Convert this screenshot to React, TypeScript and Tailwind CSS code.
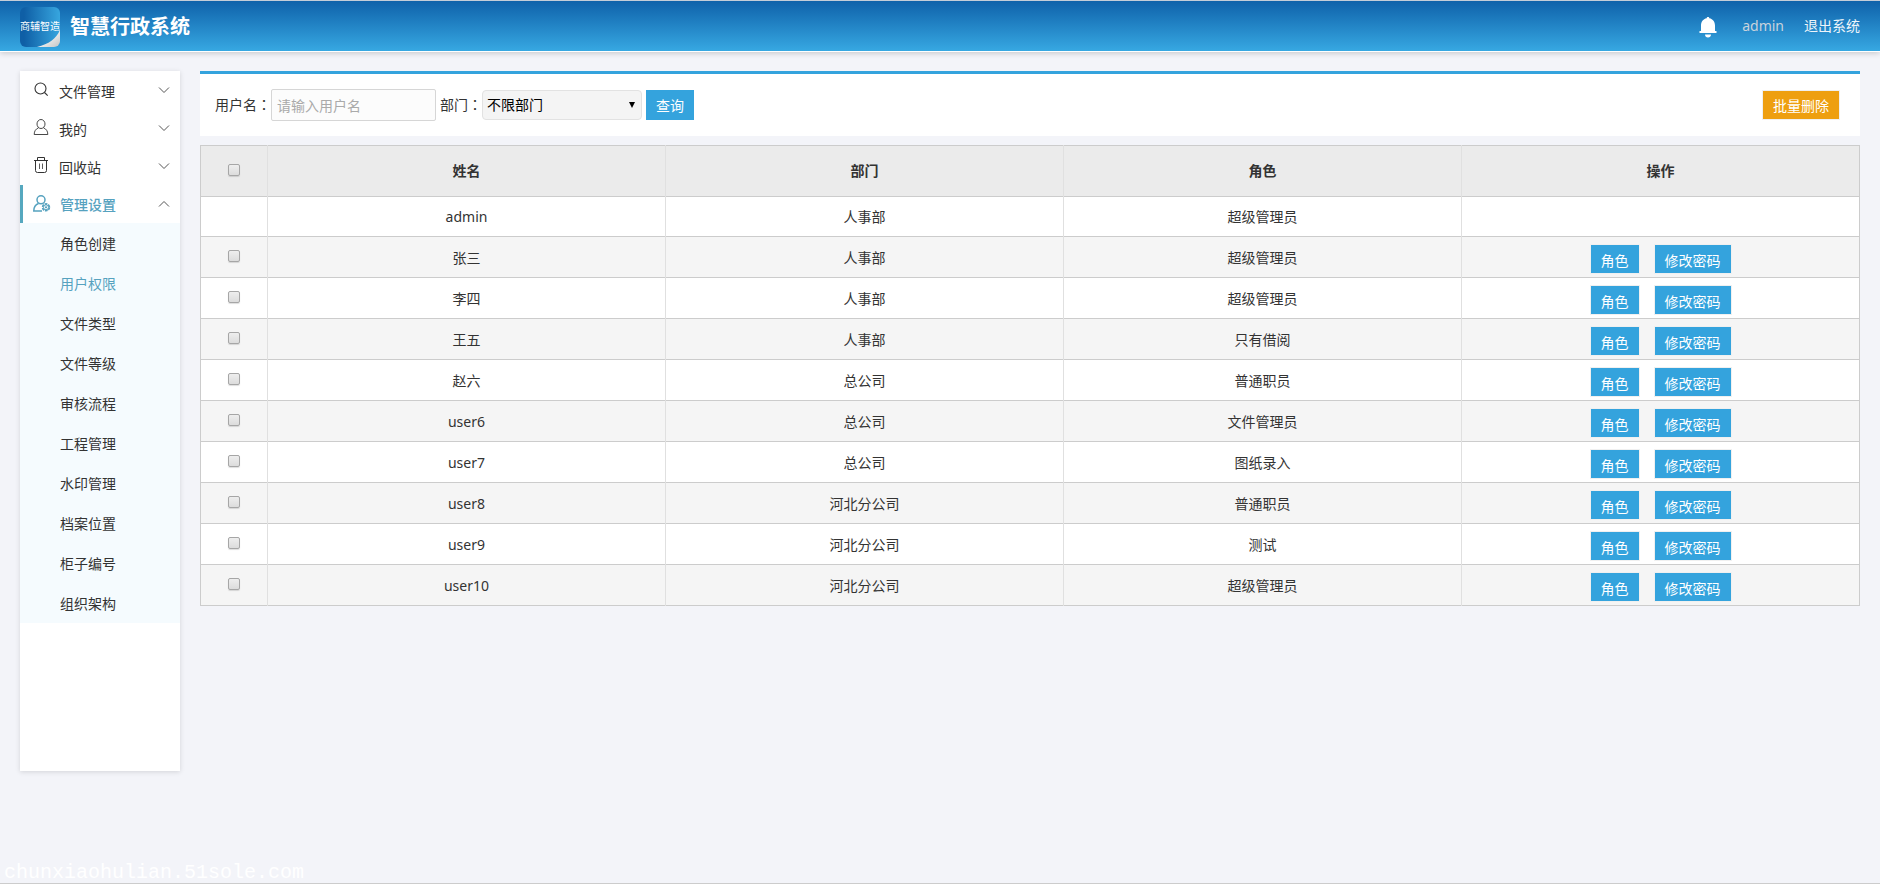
import React from 'react';

type SubItem = { label: string; active?: boolean };

type User = {
  name: string;
  dept: string;
  role: string;
  locked?: boolean;
};

const SUB_ITEMS: SubItem[] = [
  { label: '角色创建' },
  { label: '用户权限', active: true },
  { label: '文件类型' },
  { label: '文件等级' },
  { label: '审核流程' },
  { label: '工程管理' },
  { label: '水印管理' },
  { label: '档案位置' },
  { label: '柜子编号' },
  { label: '组织架构' },
];

const USERS: User[] = [
  { name: 'admin', dept: '人事部', role: '超级管理员', locked: true },
  { name: '张三', dept: '人事部', role: '超级管理员' },
  { name: '李四', dept: '人事部', role: '超级管理员' },
  { name: '王五', dept: '人事部', role: '只有借阅' },
  { name: '赵六', dept: '总公司', role: '普通职员' },
  { name: 'user6', dept: '总公司', role: '文件管理员' },
  { name: 'user7', dept: '总公司', role: '图纸录入' },
  { name: 'user8', dept: '河北分公司', role: '普通职员' },
  { name: 'user9', dept: '河北分公司', role: '测试' },
  { name: 'user10', dept: '河北分公司', role: '超级管理员' },
];

const SearchIcon = () => (
  <svg viewBox="0 0 18 18" className="size-[18px]" fill="none" stroke="currentColor" strokeWidth="1.1">
    <circle cx="7.5" cy="7.5" r="5.5" />
    <path d="M11.5 11.5l3.200 3.200" />
  </svg>
);

const UserIcon = () => (
  <svg viewBox="0 0 18 18" className="size-[18px]" fill="none" stroke="currentColor" strokeWidth="0.9">
    <ellipse cx="8" cy="5" rx="4" ry="4.500" />
    <path d="M5.500 8.800c-2.700 1.200-4.300 3.200-4.300 6.700h13.600c0-3.500-1.600-5.500-4.300-6.700" />
  </svg>
);

const TrashIcon = () => (
  <svg viewBox="0 0 18 18" className="size-[18px]" fill="none" stroke="currentColor" strokeWidth="1">
    <path d="M1 3.500h14M4.500 3.500v-3h7v3M2.500 3.500v10a2 2 0 0 0 2 2h7a2 2 0 0 0 2-2v-10" />
    <path d="M6.500 6.500v5.500M9.500 6.500v5.500" strokeWidth="0.8" />
  </svg>
);

const UserCogIcon = () => (
  <svg viewBox="0 0 18 18" className="size-[18px]" fill="none" stroke="currentColor" strokeWidth="1.5">
    <circle cx="8" cy="4.800" r="4" />
    <path d="M5.500 8.500c-3 1-4.700 3.500-4.700 7.500H9" />
    <circle cx="13" cy="12.300" r="3.400" strokeWidth="1.700" strokeDasharray="2.700 0.860" />
    <circle cx="13" cy="12.300" r="2.500" strokeWidth="1" />
    <circle cx="13" cy="12.300" r="1.100" fill="currentColor" stroke="none" />
  </svg>
);

const Chevron: React.FC<{ up?: boolean }> = ({ up }) => (
  <svg viewBox="0 0 12 8" className="h-2 w-3" fill="none" stroke="#555" strokeWidth="1">
    <path d={up ? 'M1 6.500l5-5 5 5' : 'M1 1.500l5 5 5-5'} />
  </svg>
);

const Logo = () => (
  <svg viewBox="0 0 40 40" className="size-10" role="img" aria-label="商辅智造">
    <defs>
      <linearGradient id="logo-bg" x1="0" y1="0" x2="1" y2="0">
        <stop offset="0.100" stopColor="#0f5fa6" />
        <stop offset="1" stopColor="#37a6df" />
      </linearGradient>
      <linearGradient id="logo-curl" x1="0" y1="0" x2="1" y2="1">
        <stop offset="0.300" stopColor="#ffffff" />
        <stop offset="1" stopColor="#c4c4c4" />
      </linearGradient>
      <clipPath id="logo-clip">
        <rect width="40" height="40" rx="6" />
      </clipPath>
    </defs>
    <g clipPath="url(#logo-clip)">
      <rect width="40" height="40" fill="url(#logo-bg)" />
      <path d="M40 23C36 32 29 37 17 40h23z" fill="url(#logo-curl)" />
    </g>
    <text x="20" y="23" textAnchor="middle" fontSize="10" fill="#fff" className="font-['Noto_Sans_CJK_SC',sans-serif]">
      商辅智造
    </text>
  </svg>
);

const BellIcon = () => (
  <svg viewBox="0 0 18 22" className="h-[22px] w-[18px]" fill="#fff">
    <path d="M9 1c.8 0 1.300.5 1.300 1.300C14 3 16 6 16 9.500V15h1.500v2H.5v-2H2V9.500C2 6 4 3 7.700 2.300 7.700 1.500 8.200 1 9 1zM6 18.500h6c0 2-1.300 3-3 3s-3-1-3-3z" />
  </svg>
);

const MenuRow: React.FC<{ icon: React.ReactNode; label: string; active?: boolean }> = ({ icon, label, active }) => (
  <button
    type="button"
    aria-expanded={!!active}
    className={
      active
        ? 'flex h-[38px] w-full items-center border-l-3 border-[#56a8bf] pr-[10px] pl-[10px] font-medium text-[#56a2bf]'
        : 'flex h-[38px] w-full items-center pr-[10px] pl-[13px]'
    }
  >
    {icon}
    <span className={active ? 'ml-[9px] flex-1 pt-px text-left leading-5' : 'ml-2 flex-1 pt-1 text-left leading-5'}>
      {label}
    </span>
    <Chevron up={active} />
  </button>
);

const Checkbox: React.FC<{ label: string }> = ({ label }) => (
  <input
    type="checkbox"
    aria-label={label}
    className="mx-auto block size-3 appearance-none rounded-xs border border-[#a6a6a6] bg-linear-to-b from-[#eeeeee] to-[#dcdcdc] shadow-[0_1px_1px_#0002] checked:bg-[#34a3dd]"
  />
);

// The TC face sets the full-width colon in the middle of its box.
const Colon = () => <span className="font-['Noto_Sans_CJK_TC',sans-serif]">：</span>;

const RowButton: React.FC<{ children: React.ReactNode }> = ({ children }) => (
  <button type="button" className="h-[30px] border border-[#f0f0f0] bg-[#34a3dd] px-[10px] pt-1 leading-6 text-white">
    {children}
  </button>
);

const Header = () => (
  <header className="flex h-[52px] items-center border-t border-b border-t-[#c4cdd8] border-b-white bg-linear-to-b from-[#0f62aa] to-[#37a8e2] px-5 pt-[2px] shadow-[0_1px_6px_#0003]">
    <Logo />
    <h1 className="ml-[10px] flex-1 text-xl font-bold text-white">智慧行政系统</h1>
    <div className="flex items-center pb-[3px]">
      <button type="button" aria-label="消息" className="pt-[2px]">
        <BellIcon />
      </button>
      <a href="#user" className="ml-[25px] text-[#c9d3dc]">
        admin
      </a>
      <a href="#logout" className="ml-5 text-[#eef5fa]">
        退出系统
      </a>
    </div>
  </header>
);

const Sidebar = () => (
  <nav className="h-[700px] w-40 shrink-0 bg-white shadow-[0_1px_5px_#0002]">
    <MenuRow icon={<SearchIcon />} label="文件管理" />
    <MenuRow icon={<UserIcon />} label="我的" />
    <MenuRow icon={<TrashIcon />} label="回收站" />
    <MenuRow icon={<UserCogIcon />} label="管理设置" active />
    <ul className="bg-[#f5fbfe]">
      {SUB_ITEMS.map((item) => (
        <li key={item.label}>
          <a
            href="#menu"
            className={
              item.active ? 'block h-10 pt-px pl-10 leading-10 text-[#56a2bf]' : 'block h-10 pt-px pl-10 leading-10'
            }
          >
            {item.label}
          </a>
        </li>
      ))}
    </ul>
  </nav>
);

const SearchBar = () => (
  <form className="flex h-[65px] items-center border-t-3 border-[#34a3dd] bg-white pr-5 pl-[15px]">
    <label htmlFor="username" className="pb-[2px]">
      用户名
      <Colon />
    </label>
    <input
      id="username"
      type="text"
      placeholder="请输入用户名"
      className="h-8 w-[165px] rounded-xs border border-[#d6d6d6] bg-[#fcfcfc] px-[5px] placeholder:text-[#aaaaaa]"
    />
    <label htmlFor="dept" className="ml-1 pb-[2px]">
      部门
      <Colon />
    </label>
    <div className="relative">
      <select
        id="dept"
        className="h-[30px] w-40 appearance-none rounded-sm border border-[#e2e2e2] bg-[#f4f4f4] px-1 text-black"
      >
        <option>不限部门</option>
      </select>
      <svg viewBox="0 0 6 6" className="pointer-events-none absolute top-3 right-[7px] size-[6px]">
        <path d="M0 0h6L3 6z" />
      </svg>
    </div>
    <button type="button" className="ml-1 h-[30px] bg-[#34a3dd] px-[10px] pt-px text-white">
      查询
    </button>
    <button
      type="button"
      className="mb-px ml-auto h-[30px] border border-[#f0f0f0] bg-[#ee9f10] px-[10px] pt-[2px] text-white"
    >
      批量删除
    </button>
  </form>
);

const UserTable = () => (
  <table className="mt-[9px] w-full table-fixed border-collapse border border-[#cccccc] text-center">
    <thead>
      <tr className="h-[51px] border border-[#cccccc] bg-[#ebebeb]">
        <th className="w-[67px] border-r border-[#e0e0e0] pb-[2px]">
          <Checkbox label="全选" />
        </th>
        <th className="border-r border-[#e0e0e0] font-bold">姓名</th>
        <th className="border-r border-[#e0e0e0] font-bold">部门</th>
        <th className="border-r border-[#e0e0e0] font-bold">角色</th>
        <th className="font-bold">操作</th>
      </tr>
    </thead>
    <tbody>
      {USERS.map((user) => (
        <tr
          key={user.name}
          className={
            user.locked
              ? 'h-10 border border-[#cccccc] bg-white'
              : 'h-[41px] border border-[#cccccc] bg-white even:bg-[#f5f5f5]'
          }
        >
          <td className="border-r border-[#e0e0e0] pb-[2px]">{!user.locked && <Checkbox label={user.name} />}</td>
          <td className="border-r border-[#e0e0e0] pt-px">{user.name}</td>
          <td className="border-r border-[#e0e0e0] pt-px">{user.dept}</td>
          <td className="border-r border-[#e0e0e0] pt-px">{user.role}</td>
          <td>
            {!user.locked && (
              <div className="flex justify-center gap-[14px] pt-1">
                <RowButton>角色</RowButton>
                <RowButton>修改密码</RowButton>
              </div>
            )}
          </td>
        </tr>
      ))}
    </tbody>
  </table>
);

export default function App() {
  return (
    <div className="flex min-h-screen flex-col border-b border-[#cccccc] bg-[#f3f4f9] font-['Noto_Sans','Noto_Sans_CJK_SC',sans-serif] text-sm text-[#333333]">
      <Header />
      <div className="mt-[19px] flex gap-5 px-5">
        <Sidebar />
        <main className="min-w-0 flex-1">
          <SearchBar />
          <UserTable />
        </main>
      </div>
      <footer className="mt-auto pl-1 font-['Liberation_Mono',monospace] text-xl leading-5 text-white">
        chunxiaohulian.51sole.com
      </footer>
    </div>
  );
}
